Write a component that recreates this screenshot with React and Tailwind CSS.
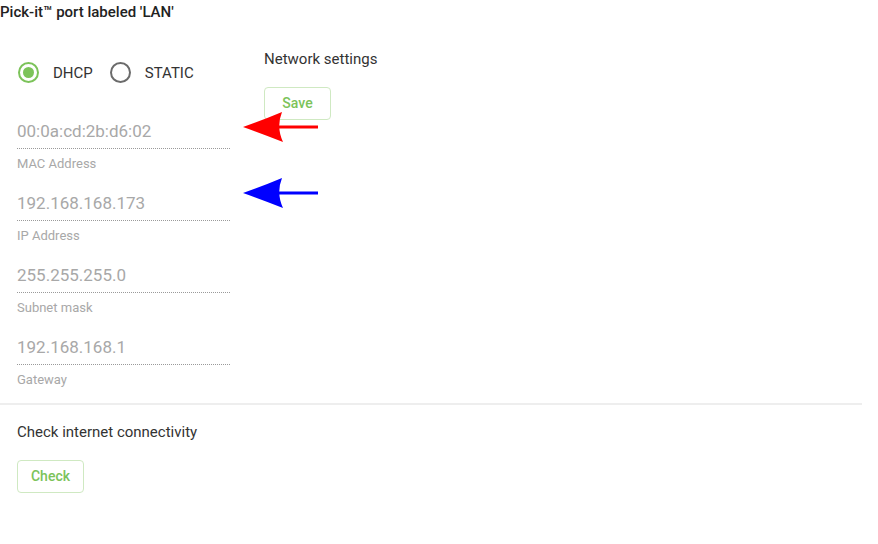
import React from "react"

const fields = [
  { value: "00:0a:cd:2b:d6:02", label: "MAC Address" },
  { value: "192.168.168.173", label: "IP Address" },
  { value: "255.255.255.0", label: "Subnet mask" },
  { value: "192.168.168.1", label: "Gateway" },
]

const Radio = ({ checked, label }) => (
  <label className="flex items-center">
    <span
      className={`w-[21px] h-[21px] rounded-full border-2 flex items-center justify-center ${
        checked ? "border-[#7cc35a]" : "border-[#6b6b6b]"
      }`}
    >
      {checked && <span className="w-[11px] h-[11px] rounded-full bg-[#7cc35a]" />}
    </span>
    <span className="ml-[14px] text-[15px] leading-[20px] text-[#333]">{label}</span>
  </label>
)

const Arrow = ({ color, className }) => (
  <svg className={className} width="76" height="32" viewBox="0 0 76 32">
    <path d="M0 16 Q20 9 39 1 Q33 16 40 31 Q20 23 0 16 Z" fill={color} />
    <line x1="34" y1="16" x2="75" y2="16" stroke={color} strokeWidth="3" />
  </svg>
)

const OutlineButton = ({ children }) => (
  <button className="w-[67px] h-[33px] rounded-[4px] border border-[#cfe9c2] bg-white text-[14px] font-medium text-[#7cc35a]">
    {children}
  </button>
)

export default function App() {
  return (
    <div className="relative w-[878px] h-[544px] bg-white font-['Roboto',sans-serif]">
      <div className="h-[24px] leading-[24px] text-[15px] font-medium text-[#222]">
        Pick-it™ port labeled 'LAN'
      </div>

      <div className="flex">
        {/* left column */}
        <div className="w-[230px] pl-[17px] pt-[38px]">
          <div className="flex items-center gap-[17px] pl-[1px]">
            <Radio checked label="DHCP" />
            <Radio label="STATIC" />
          </div>

          <div className="mt-[36px]">
            {fields.map((f, i) => (
              <div key={f.label} className={i ? "mt-[19px]" : ""}>
                <div className="h-[30px] leading-[24px] text-[17px] text-[#a8a8a8] border-b border-dotted border-[#9a9a9a]">
                  {f.value}
                </div>
                <div className="mt-[7px] leading-[16px] text-[13px] text-[#a8a8a8]">{f.label}</div>
              </div>
            ))}
          </div>
        </div>

        {/* right column */}
        <div className="ml-[34px] pt-[25px]">
          <div className="text-[15px] leading-[20px] text-[#333]">Network settings</div>
          <div className="mt-[18px]">
            <OutlineButton>Save</OutlineButton>
          </div>
        </div>
      </div>

      <div className="mt-[15px] w-[862px] h-[2px] bg-[#eeeeee]" />

      <div className="pl-[17px] pt-[17px]">
        <div className="text-[15px] leading-[20px] text-[#333]">Check internet connectivity</div>
        <div className="mt-[18px]">
          <OutlineButton>Check</OutlineButton>
        </div>
      </div>

      <Arrow color="#ff0000" className="absolute left-[243px] top-[111px]" />
      <Arrow color="#0000ff" className="absolute left-[243px] top-[177px]" />
    </div>
  )
}
